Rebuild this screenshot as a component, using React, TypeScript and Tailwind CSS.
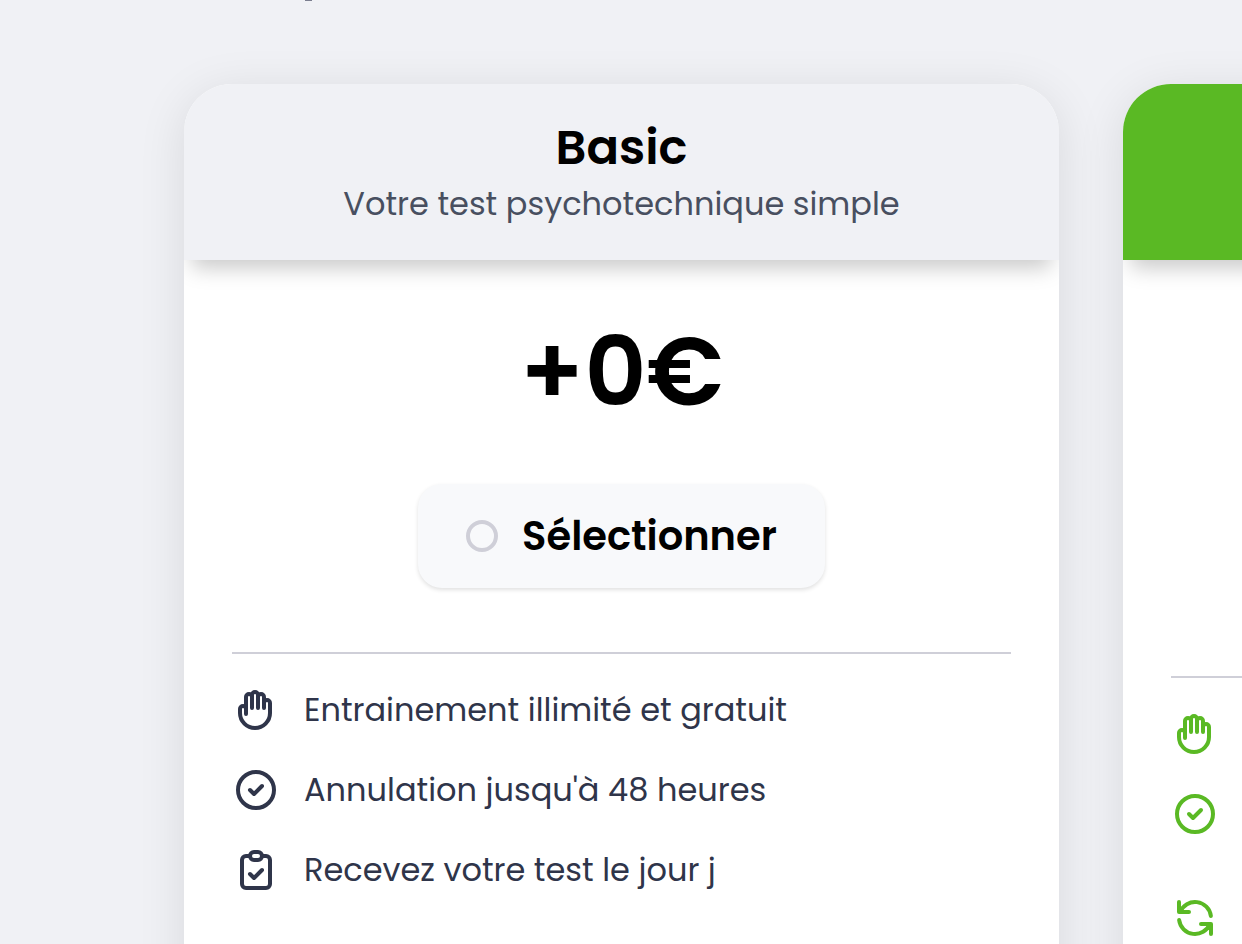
import type { ReactNode } from "react";

function Icon({ d }: { d: string }) {
  return (
    <svg
      viewBox="0 0 24 24"
      className="size-12 shrink-0"
      fill="none"
      stroke="currentColor"
      strokeWidth={2}
      strokeLinecap="round"
      strokeLinejoin="round"
      aria-hidden="true"
    >
      <path d={d} />
    </svg>
  );
}

const HAND =
  "M7 11.5V14m0-2.5v-6a1.5 1.5 0 113 0m-3 6a1.5 1.5 0 00-3 0v2a7.5 7.5 0 0015 0v-5a1.5 1.5 0 00-3 0m-6-3V11m0-5.5v-1a1.5 1.5 0 013 0v1m0 0V11m0-5.5a1.5 1.5 0 013 0v3m0 0V11";
const CHECK = "M9 12l2 2 4-4m6 2a9 9 0 11-18 0 9 9 0 0118 0z";
const CLIPBOARD =
  "M9 5H7a2 2 0 00-2 2v12a2 2 0 002 2h10a2 2 0 002-2V7a2 2 0 00-2-2h-2M9 5a2 2 0 002 2h2a2 2 0 002-2M9 5a2 2 0 012-2h2a2 2 0 012 2m-6 9l2 2 4-4";
const REFRESH =
  "M4 4v5h.582m15.356 2A8.001 8.001 0 004.582 9m0 0H9m11 11v-5h-.581m0 0a8.003 8.003 0 01-15.357-2m15.357 2H15";

function Card({ children }: { children: ReactNode }) {
  return (
    <article className="w-full shrink-0 overflow-hidden rounded-[48px] bg-white shadow-[0_8px_48px_rgba(0,0,0,0.1)]">
      {children}
    </article>
  );
}

const features = [
  { icon: HAND, text: "Entrainement illimité et gratuit" },
  { icon: CHECK, text: "Annulation jusqu'à 48 heures" },
  { icon: CLIPBOARD, text: "Recevez votre test le jour j" },
];

export default function App() {
  return (
    <main className="h-screen overflow-hidden bg-[#f0f1f5] pr-[183px] pl-[184px] font-['Poppins','Inter',sans-serif] text-black">
      <div className="h-[84px] pl-[121px]">
        <div className="h-px w-[7px] bg-[#7b7e8f]" />
      </div>
      <div className="flex gap-16">
        <Card>
          <header className="bg-[#f0f1f5] py-8 text-center shadow-[0_16px_20px_-8px_rgba(0,0,0,0.21)]">
            <h2 className="text-[48px] leading-[64px] font-semibold">Basic</h2>
            <p className="text-[32px] leading-[48px] text-[#484f60]">
              Votre test psychotechnique simple
            </p>
          </header>
          <div className="flex flex-col px-12 pt-16 pb-24">
            <p className="text-center text-[96px] leading-[96px] font-semibold">+0€</p>
            <label className="mt-16 flex h-[104px] cursor-pointer items-center gap-6 self-center rounded-3xl bg-[#f8f9fb] px-12 text-[40px] leading-[56px] font-semibold shadow-[0_2px_4px_rgba(0,0,0,0.12)]">
              <input
                type="radio"
                name="plan"
                className="size-8 appearance-none rounded-full border-4 border-[#cfcfd8] checked:border-[#5ab924]"
              />
              Sélectionner
            </label>
            <hr className="mt-16 border-t-2 border-[#cfcfd8]" />
            <ul className="mt-8 flex flex-col gap-8 text-[#2f354a]">
              {features.map((f) => (
                <li key={f.text} className="flex items-center gap-6">
                  <Icon d={f.icon} />
                  <span className="text-[32px] leading-[48px]">{f.text}</span>
                </li>
              ))}
            </ul>
          </div>
        </Card>
        <Card>
          <header className="h-44 bg-[#5ab924] shadow-[0_16px_20px_-8px_rgba(0,0,0,0.21)]" />
          <div className="px-12 pt-[416px] pb-24">
            <hr className="border-t-2 border-[#cfcfd8]" />
            <ul className="mt-8 flex flex-col gap-8 text-[#5ab924]">
              <li className="flex items-center">
                <Icon d={HAND} />
              </li>
              <li className="flex items-center">
                <Icon d={CHECK} />
              </li>
              <li className="flex h-24 items-center">
                <Icon d={REFRESH} />
              </li>
            </ul>
          </div>
        </Card>
      </div>
    </main>
  );
}
